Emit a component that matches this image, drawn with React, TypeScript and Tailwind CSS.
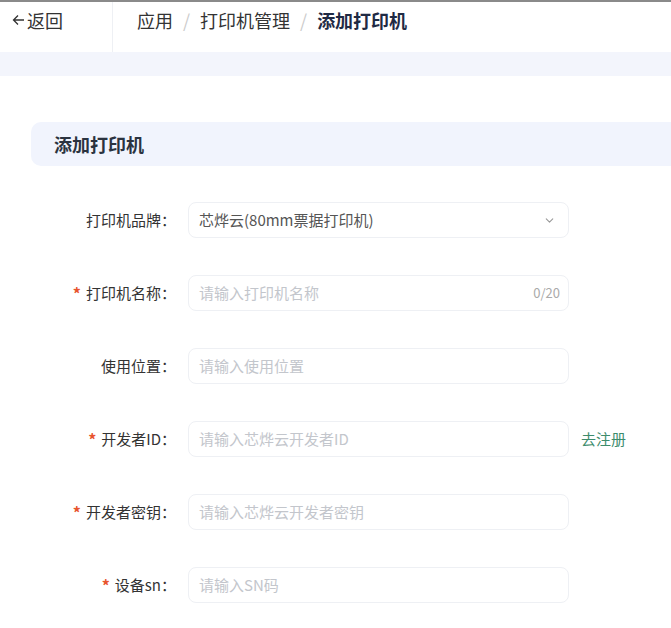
import { ChevronDown } from "lucide-react";

const font = { fontFamily: '"Noto Sans CJK SC", "Noto Sans", sans-serif' };

type Field = {
  label: string;
  required?: boolean;
  placeholder?: string;
  value?: string;
  select?: boolean;
  counter?: string;
  link?: string;
};

const fields: Field[] = [
  { label: "打印机品牌", value: "芯烨云(80mm票据打印机)", select: true },
  { label: "打印机名称", required: true, placeholder: "请输入打印机名称", counter: "0/20" },
  { label: "使用位置", placeholder: "请输入使用位置" },
  { label: "开发者ID", required: true, placeholder: "请输入芯烨云开发者ID", link: "去注册" },
  { label: "开发者密钥", required: true, placeholder: "请输入芯烨云开发者密钥" },
  { label: "设备sn", required: true, placeholder: "请输入SN码" },
];

function Row({ f }: { f: Field }) {
  return (
    <div className="flex items-center h-[36px]">
      <div className="w-[157px] flex justify-end items-center pr-[12px] text-[15px] text-[#333]">
        {f.required && <span className="text-[#e8542e] mr-[5px] text-[16px] leading-none font-bold">*</span>}
        <span>{f.label}：</span>
      </div>
      <div className="w-[381px] h-[36px] rounded-[8px] border border-[#eef0f4] bg-white flex items-center pl-[10px] pr-[8px]">
        {f.select ? (
          <>
            <span className="flex-1 text-[15px] text-[#555]">{f.value}</span>
            <ChevronDown className="w-[13px] h-[13px] text-[#999] mr-[4px]" strokeWidth={2} />
          </>
        ) : (
          <>
            <span className="flex-1 text-[15px] text-[#c3c6cc]">{f.placeholder}</span>
            {f.counter && <span className="text-[13px] text-[#aaa]">{f.counter}</span>}
          </>
        )}
      </div>
      {f.link && <span className="ml-[12px] text-[15px] text-[#3d8c6c]">{f.link}</span>}
    </div>
  );
}

export default function App() {
  return (
    <div className="w-[671px] h-[628px] bg-white overflow-hidden border-t-2 border-[#8a8a8a]" style={font}>
      <div className="h-[50px] flex">
        <div className="w-[113px] border-r border-[#eef0f4] flex items-center pl-[12px] pb-[14px] text-[18px] text-[#333]">
          <svg width="13" height="12" viewBox="0 0 13 12" className="mr-[2px]" fill="none" stroke="#333" strokeWidth="1.3">
            <path d="M12 6H1.5M6 1.5L1.5 6L6 10.5" />
          </svg>
          返回
        </div>
        <div className="flex items-center pl-[24px] pb-[14px] text-[18px] text-[#333]">
          <span>应用</span>
          <span className="mx-[10px] text-[#ccc]">/</span>
          <span>打印机管理</span>
          <span className="mx-[10px] text-[#ccc]">/</span>
          <span className="font-bold text-[#1f2a44]">添加打印机</span>
        </div>
      </div>
      <div className="h-[24px] bg-[#f3f5fc]" />
      <div className="pt-[46px] pl-[31px]">
        <div className="h-[44px] rounded-l-[10px] bg-[#f1f4fd] flex items-center pl-[23px] text-[18px] font-bold text-[#2b3340]">
          添加打印机
        </div>
        <div className="flex flex-col gap-[37px] pt-[36px]">
          {fields.map((f) => (
            <Row key={f.label} f={f} />
          ))}
        </div>
      </div>
    </div>
  );
}
